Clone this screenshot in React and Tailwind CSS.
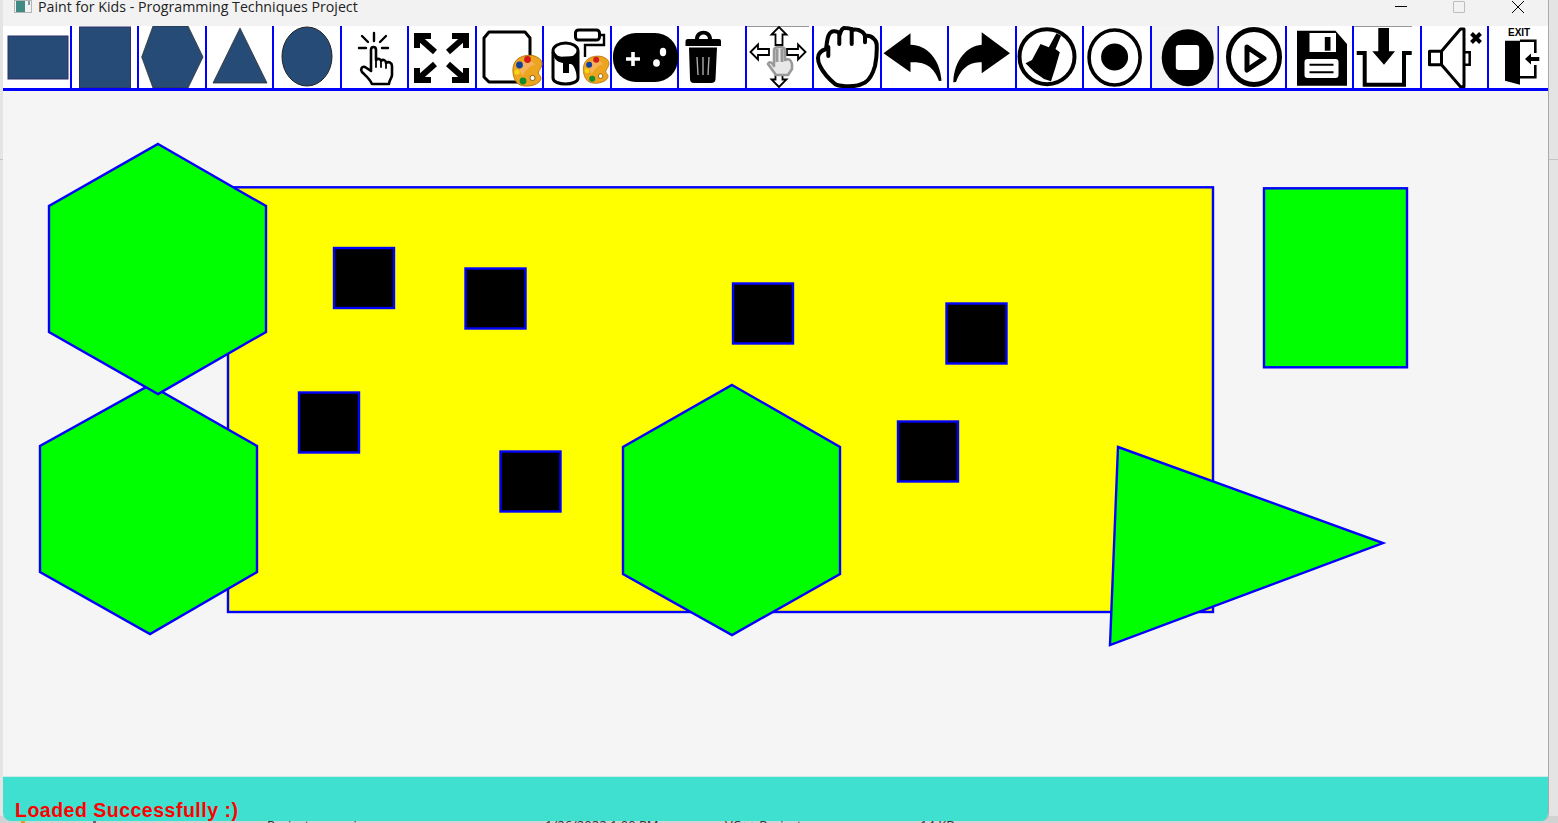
const B = "#264b76";

function Palette({ x = 0, y = 0, s = 1 }) {
  return (
    <g transform={`translate(${x} ${y}) scale(${s})`}>
      <path d="M4 6C10 0 24 -1 29 7C31 12 27 15 26 18C25 21 30 22 28 26C25 32 12 34 6 30C0 26 -2 12 4 6Z" fill="#eda51f" stroke="#b87a14" strokeWidth="1" />
      <path d="M8 9C13 5 20 6 23 11C19 10 13 16 10 22C7 18 6 12 8 9Z" fill="#f4b25a" />
      <circle cx="15" cy="5.5" r="3.4" fill="#d31a1a" />
      <circle cx="7" cy="11" r="3.4" fill="#12409c" />
      <circle cx="4.5" cy="18" r="2.6" fill="#f5d90f" />
      <circle cx="10.5" cy="27" r="3.4" fill="#138a2c" />
      <circle cx="20" cy="24" r="2.6" fill="#fff" stroke="#8a5c12" strokeWidth="1" />
    </g>
  );
}

const icons = [
  <rect x="4" y="10" width="60" height="43" fill={B} stroke="#2f2f6b" strokeWidth="1" />,
  <rect x="7.5" y="1" width="51" height="61" fill={B} stroke="#2f2f6b" strokeWidth="1" />,
  <polygon points="14,0 49,0 64,31 49,62 14,62 2.7,31" fill={B} stroke="#333" strokeWidth="0.8" />,
  <polygon points="33,2 60,57 6,57" fill={B} stroke="#333" strokeWidth="0.8" />,
  <ellipse cx="33" cy="30.5" rx="25" ry="29.5" fill={B} stroke="#222" strokeWidth="1" />,
  <g fill="none" stroke="#000" strokeLinecap="round" strokeLinejoin="round" transform="translate(-1 0)">
    <path strokeWidth="2.4" d="M33 7V15M21 10L27 16M45 10L39 16M18 22H25M41 22H47" />
    <path strokeWidth="2.6" fill="#fff" d="M30 24C30 20 35 20 35 24V34C37 32 40 33 40 35C42 33 45 34 45 37C48 35 51 37 51 40V49C51 52 48 54 48 58H31C29 53 25 50 21 46C19 43 21 40 24 41L30 45Z" />
    <path strokeWidth="1.8" d="M35 33V41M40 35V41M45 37V42" />
  </g>,
  <g fill="none" stroke="#000" strokeWidth="6" strokeLinejoin="miter">
    <path d="M8 22V10H22" /><path d="M9 11L26 26" />
    <path d="M57 22V10H43" /><path d="M56 11L39 26" />
    <path d="M8 42V54H22" /><path d="M9 53L26 38" />
    <path d="M57 42V54H43" /><path d="M56 53L39 38" />
  </g>,
  <g>
    <path d="M12 6H48L53 12V51L48 56H12L7 51V12Z" fill="none" stroke="#000" strokeWidth="3" strokeLinejoin="round" />
    <Palette x={35.5} y={28} s={1} />
  </g>,
  <g>
    <g fill="none" stroke="#000" strokeWidth="3">
      <path d="M9 26V52C9 60 34 60 34 52V26" fill="#fff" />
      <ellipse cx="21.5" cy="25" rx="12.5" ry="8" fill="#fff" />
      <path d="M33 30V50C30 37 27 38 25 38V47H19V37C15 36 13 36 10 31Z" fill="#000" stroke="none" />
      <rect x="31.5" y="4" width="24" height="10" rx="3" fill="#fff" />
      <path d="M56 9H60V19H41V31" strokeWidth="2.4" />
    </g>
    <Palette x={39} y={29} s={0.88} />
  </g>,
  <g>
    <rect x="1" y="7" width="65" height="49" rx="23" fill="#000" />
    <path d="M21 26V40M14 33H28" stroke="#fff" strokeWidth="3.6" />
    <ellipse cx="51" cy="26" rx="3.2" ry="4.2" fill="#fff" />
    <ellipse cx="44.5" cy="37" rx="3.4" ry="3.8" fill="#fff" />
  </g>,
  <g>
    <path d="M16 13C16 2 33 2 33 13H40Q42 13 42 15V20H6.5V15Q6.5 13 9 13ZM20 13H29C29 7 20 7 20 13Z" fill="#000" />
    <path d="M10 21.5H38L36.5 53Q36.5 57 32 57H15Q11 57 11 53Z" fill="#000" />
    <path d="M18 31L19 49M24 31V49M30 31L29 49" stroke="#aaa" strokeWidth="1.4" />
  </g>,
  <g>
    <path d="M0 0H62" stroke="#333" strokeWidth="1" />
    <g fill="#fff" stroke="#000" strokeWidth="1.8" strokeLinejoin="miter">
      <path d="M32 1L24.5 8.5H28.5V19H35.5V8.5H39.5Z" />
      <path d="M32 61L24.5 53.5H28.5V44H35.5V53.5H39.5Z" />
      <path d="M3.5 26L11 18.5V23H22V29H11V33.5Z" />
      <path d="M58.5 26L51 18.5V23H40V29H51V33.5Z" />
    </g>
    <path d="M27 40V24C27 20 38 20 38 24V34C42 32 44 34 45 38V43L41 49H29L21 38C22 35 25 36 27 40Z" fill="#e8e8e8" stroke="#999" strokeWidth="2.6" strokeLinejoin="round" />
    <path d="M30 23V36M35 23V36" stroke="#999" strokeWidth="3" />
  </g>,
  <g fill="none" stroke="#000" strokeWidth="4" strokeLinejoin="round" strokeLinecap="round">
    <path fill="#fff" d="M4 32C4 26 9 24 12 23C13 17 13 13 14.5 9.7C16 6 19 5 21 5.3C23.5 5.5 25 6 26 8C27 4 29 1.5 31 2C34 2 36.5 2 38 4C41 3 45 4 46.5 5C49 6 50.5 8 51 10C54 9.5 57.5 10.5 59.5 12.5C62 14.5 62.7 16 62.7 19C63 26 62.5 33 61 40C59 47 55 54 51 56.5C45 60 38 60.5 32.7 60.3C28 60 24 60 21 58C15 53 9 46 6 40C4.5 37 4 35 4 32Z" />
    <path d="M25.3 8V18M37.7 3V18M51 10V16.3M14.3 21V30" />
  </g>,
  <path d="M1.5 27.3L28.5 7.3V18.7C45 19 58 33 59.5 54.7L57 55C53 44 46 35 28.5 36.3V46.3Z" fill="#000" />,
  <path d="M61 27.3L32.7 6.3V18.7C18 20 5 34 4.3 56.3L7 56C11 44 20 35 32.7 36.3V47.3Z" fill="#000" />,
  <g>
    <circle cx="30" cy="30.7" r="27.5" fill="#fff" stroke="#000" strokeWidth="4" />
    <path d="M39.5 7.3L44 9.7L38.5 23L42.8 26.3L38.5 41.3L34 55.3L27 53L17.5 46.3L8.5 37.3L15 34L23.5 18L31.8 21.3Z" fill="#000" />
  </g>,
  <g>
    <ellipse cx="30.6" cy="31.5" rx="25.5" ry="27.5" fill="#fff" stroke="#000" strokeWidth="3.6" />
    <circle cx="30.6" cy="31" r="13.5" fill="#000" />
  </g>,
  <g>
    <rect x="0" y="0" width="65.5" height="62" fill="#f4f4f4" />
    <ellipse cx="35.7" cy="31.7" rx="26" ry="28.5" fill="#000" />
    <rect x="23.8" y="19" width="23.4" height="25" rx="3" fill="#fff" />
  </g>,
  <g>
    <ellipse cx="35" cy="31" rx="25.5" ry="27.5" fill="#fff" stroke="#000" strokeWidth="5" />
    <path d="M28 21L45 32.5L28 44Z" fill="none" stroke="#000" strokeWidth="5" strokeLinejoin="round" />
  </g>,
  <g>
    <path d="M10 4.7H48.5L60 18V59.7H10Z" fill="#000" />
    <path d="M22.5 7H49V26H22.5Z" fill="#fff" />
    <path d="M37.8 11H43.5V24.7H37.8Z" fill="#000" />
    <rect x="17.5" y="33" width="34" height="19" rx="3" fill="#fff" />
    <path d="M22.5 38.7H46.5M22.5 46.3H46.5" stroke="#000" strokeWidth="2" />
  </g>,
  <g>
    <path d="M0 0H58" stroke="#333" strokeWidth="1" />
    <path d="M24.3 2H35V25.3H41L30 38.7L18.3 25.3H24.3Z" fill="#000" />
    <path d="M2.7 27H10.7V58.7H50V27H57.7" fill="none" stroke="#000" strokeWidth="4" />
  </g>,
  <g>
    <path d="M7.5 25.3H19.5L38.5 3H42V60.7H38.5L19.5 38.7H7.5Z" fill="#fff" stroke="#000" strokeWidth="3" strokeLinejoin="round" />
    <path d="M19.5 25.3V38.7" stroke="#000" strokeWidth="3" />
    <path d="M42 26.3H47.7V38.7H42" fill="none" stroke="#000" strokeWidth="2.5" />
    <path d="M49.5 7.5L58.5 16.5M58.5 7.5L49.5 16.5" stroke="#000" strokeWidth="4" />
  </g>,
  <g>
    <path d="M30 14.7H45.3V27M45.3 39V51.3H30" fill="none" stroke="#000" strokeWidth="2.6" />
    <path d="M15 14.7H30V58.7L15 54.7Z" fill="#000" />
    <path d="M35 33L41 27.5V31H49.3V35H41V38.5Z" fill="#000" />
  </g>,
];

function Tool({ children, last }) {
  return (
    <div className={`relative w-[67.5px] h-full shrink-0 bg-white ${last ? "" : "border-r-2 border-[#0000ff]"}`}>
      <svg viewBox="0 0 65.5 62" className="w-full h-full overflow-visible block">{children}</svg>
      {last && (
        <span className="absolute left-[19px] top-[2px] text-black text-[10px] leading-[10px] font-bold font-['Liberation_Sans',sans-serif]">EXIT</span>
      )}
    </div>
  );
}

function Canvas() {
  const squares = [[334, 248], [465.5, 268.5], [733, 283.5], [946.5, 303.5], [299, 392.5], [500.5, 451.5], [898, 421.5]];
  return (
    <div className="flex-1 bg-[#f5f5f5] min-h-0">
      <svg viewBox="3 91 1545 685" className="w-full h-full block">
        <g stroke="#0000ff" strokeWidth="2.4">
          <rect x="228" y="187.3" width="985" height="424.7" fill="#ffff00" />
          <rect x="1264" y="188.3" width="143" height="179" fill="#00ff00" />
          {squares.map(([x, y]) => (
            <rect key={x} x={x} y={y} width="60" height="60" fill="#000" />
          ))}
          <polygon points="150,385 257,446 257,572 150,634 40,572 40,446" fill="#00ff00" />
          <polygon points="158,144 266,206 266,332 158,394 49,332 49,206" fill="#00ff00" />
          <polygon points="732,385 840,447 840,574 732,635 623,574 623,447" fill="#00ff00" />
          <polygon points="1118,447 1383,543 1110,645" fill="#00ff00" />
        </g>
      </svg>
    </div>
  );
}

export default function App() {
  return (
    <div className="relative h-[823px] w-[1558px] overflow-hidden bg-[#e4e4e4] font-['Liberation_Sans',sans-serif]">
      <div className="absolute left-0 right-0 top-[159px] h-px bg-[#c4c4c4]" />
      <div className="absolute left-0 right-0 top-[816px] h-[7px] bg-[#d2d2d2] text-[13px] leading-[18px] text-[#333] font-['Open_Sans',sans-serif] whitespace-nowrap">
        <span className="absolute left-[21px] top-[4px] w-[4px] h-[4px] bg-[#d9a21b]" />
        <span className="absolute left-[93px] top-[4px] w-[3px] h-[4px] bg-[#666]" />
        <span className="absolute left-[267px] top-0">Project.vcxproj</span>
        <span className="absolute left-[545px] top-0">1/26/2022 1:00 PM</span>
        <span className="absolute left-[725px] top-0">VC++ Project</span>
        <span className="absolute left-[920px] top-0">14 KB</span>
      </div>
      <div className="relative ml-[3px] w-[1546px] h-[821px] flex flex-col rounded-b-lg overflow-hidden border-r border-[#aaaaaa]">
        <div className="h-[26px] shrink-0 bg-[#f2f2f2] flex items-start relative">
          <svg viewBox="0 0 18 13" className="w-[18px] h-[13px] ml-[11px] shrink-0">
            <rect x="0.5" y="0.5" width="17" height="12" fill="#f2f2f2" stroke="#b5b5b5" />
            <rect x="2" y="1" width="9" height="11" fill="#3f8b83" />
            <rect x="14" y="1" width="2" height="4" fill="#7a9ca8" />
          </svg>
          <span className="ml-[6px] text-[14.2px] leading-[14px] text-[#222] font-['Open_Sans',sans-serif] whitespace-nowrap">Paint for Kids - Programming Techniques Project</span>
          <div className="ml-auto flex items-start text-black">
            <div className="w-[58px] h-[14px] flex justify-center pt-[6px]"><div className="w-[12px] h-px bg-black" /></div>
            <div className="w-[58px] h-[14px] flex justify-center pt-[1px]"><div className="w-[12px] h-[12px] border border-[#bdbdbd] rounded-[1px]" /></div>
            <div className="w-[60px] flex justify-center">
              <svg viewBox="0 0 12 12" className="w-[12px] h-[12px] mt-[1px]"><path d="M0 0L12 12M12 0L0 12" stroke="#000" strokeWidth="1" /></svg>
            </div>
          </div>
        </div>
        <div className="h-[65px] shrink-0 flex bg-white border-b-[3px] border-[#0000ff] pl-[1px] overflow-hidden">
          {icons.map((ic, i) => (
            <Tool key={i} last={i === icons.length - 1}>{ic}</Tool>
          ))}
        </div>
        <Canvas />
        <div className="h-[45px] shrink-0 bg-[#40e0d0] border-t border-[#cfe9e6] relative">
          <div className="absolute left-[12px] top-[21px] text-[19.5px] leading-[24px] tracking-[0.5px] font-bold text-[#ff0000] whitespace-nowrap">Loaded Successfully :)</div>
        </div>
      </div>
    </div>
  );
}
